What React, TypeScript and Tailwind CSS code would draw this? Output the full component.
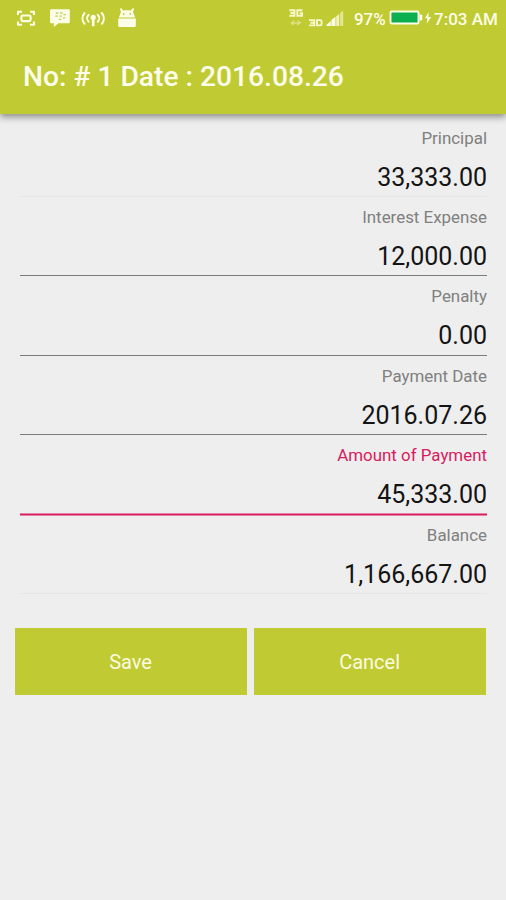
type Line = 'faint' | 'normal' | 'active';

interface Field {
  label: string;
  value: string;
  line: Line;
}

const fields: Field[] = [
  { label: 'Principal', value: '33,333.00', line: 'faint' },
  { label: 'Interest Expense', value: '12,000.00', line: 'normal' },
  { label: 'Penalty', value: '0.00', line: 'normal' },
  { label: 'Payment Date', value: '2016.07.26', line: 'normal' },
  { label: 'Amount of Payment', value: '45,333.00', line: 'active' },
  { label: 'Balance', value: '1,166,667.00', line: 'faint' },
];

const lineStyles: Record<Line, string> = {
  faint: 'h-px bg-[#e6e6e6]',
  normal: 'h-px bg-[#7b7b7b]',
  active: 'h-[2px] translate-y-[0.5px] bg-[#d81b60]',
};

function NotificationIcons() {
  return (
    <svg width="140" height="36" viewBox="0 0 140 36" fill="#fcfde8" className="shrink-0">
      {/* screen capture */}
      <g fill="none" stroke="#fcfde8" strokeWidth="2.1" strokeLinejoin="round">
        <path d="M18 15v-3.2h4M30 11.8h4V15M34 21.6v3.2h-4M22 24.8h-4v-3.2" />
        <rect x="21.4" y="15.5" width="9.2" height="5.6" rx="1.4" />
      </g>
      {/* messenger bubble */}
      <path d="M51.2 9.3h17.4a1.2 1.2 0 0 1 1.2 1.2v11.6a1.2 1.2 0 0 1-1.2 1.2H58.5L53.8 27v-3.7h-2.6a1.2 1.2 0 0 1-1.2-1.2V10.5a1.2 1.2 0 0 1 1.2-1.2z" />
      <g fill="none" stroke="#c8d05a" strokeWidth="1.3">
        <path d="M55.8 13h2.6M55.2 16.2h2.6M60 13h2.6M59.4 16.2h2.6M58.8 19.4h2.6M63.4 14.6h2.4M62.8 17.8h2.4" />
      </g>
      {/* antenna */}
      <g fill="none" stroke="#fcfde8" strokeWidth="2" strokeLinecap="round">
        <path d="M84.6 13c-2.8 3.2-2.8 7.6 0 10.8M88.6 14.8c-1.9 2-1.9 5 0 7M101.8 13c2.8 3.2 2.8 7.6 0 10.8M97.8 14.8c1.9 2 1.9 5 0 7" />
      </g>
      <circle cx="93.2" cy="17.4" r="2.6" />
      <path d="M91.9 18h2.6v8.2h-2.6z" />
      {/* robot */}
      <path fillRule="evenodd" d="M118.8 17.4l2.2-5.4-1.1-3.2 1.3-.7 2 2.4c2.3-.5 5.3-.5 7.6 0l2-2.4 1.3.7L133 12l2.2 5.4zM123.7 13.1a.9.9 0 1 0 0 1.8.9.9 0 0 0 0-1.8zM130.3 13.1a.9.9 0 1 0 0 1.8.9.9 0 0 0 0-1.8z" />
      <path d="M118.2 18.5h17.6v7.2a1.2 1.2 0 0 1-1.2 1.2h-15.2a1.2 1.2 0 0 1-1.2-1.2z" />
    </svg>
  );
}

function SignalIcons() {
  return (
    <svg width="58" height="36" viewBox="288 0 58 36" className="shrink-0">
      <g fill="none" stroke="#f7f8c9" strokeWidth="1.9">
        <path d="M289.3 10.2h5.2v5.6h-5.2M290.5 13h4M302.3 10.2h-5v5.6h4.8v-2.5h-2.4" />
        <path d="M309 20.1h5.3v5.3H309M310.3 22.8h4M317 20.1h3.2q1.4 0 1.4 1.4v2.5q0 1.4-1.4 1.4H317z" />
      </g>
      <path d="M294.4 20.6l-3.2 2.4 2.4 2M297.5 20.5l3 2-3.3 2.4M291.5 23h8" fill="none" stroke="#dce27e" strokeWidth="1.3" />
      <path d="M326.5 26v-1.3l4.3-3.8V26zM331.4 26v-5.9l4.1-3.4V26z" fill="#fcfde8" />
      <path d="M336.2 26v-9.4l3-2.7V26z" fill="#f1f3bd" />
      <path d="M340.1 26V13.1l3.1-2.7V26z" fill="#e2e78f" />
    </svg>
  );
}

function BatteryIcon() {
  return (
    <svg width="44" height="36" viewBox="388 0 44 36" className="shrink-0">
      <rect x="390.5" y="11.5" width="28" height="12" rx="1.2" fill="#0caf50" stroke="#fcfde8" strokeWidth="1.9" />
      <path d="M419.5 14.5h1.5q1.3 0 1.3 1.3v3.4q0 1.3-1.3 1.3h-1.5z" fill="#fcfde8" />
      <path d="M428.7 12l-3.7 6.3h2.4l-.7 5.5 4.5-6.9h-2.9z" fill="#fcfde8" />
    </svg>
  );
}

function StatusBar() {
  return (
    <div className="flex h-9 items-center leading-9 font-medium text-[#fcfde8]">
      <NotificationIcons />
      <div className="ml-auto flex items-center pr-2">
        <SignalIcons />
        <span className="ml-2 w-[34px] pt-px text-[16.9px] whitespace-nowrap">97%</span>
        <BatteryIcon />
        <span className="ml-[2px] w-[64px] pt-px text-[17px] whitespace-nowrap">7:03 AM</span>
      </div>
    </div>
  );
}

function FieldRow({ label, value, line }: Field) {
  const active = line === 'active';
  return (
    <div className="flex h-[79.4px] flex-col text-right">
      <div className={`pt-[9px] text-[16.9px] leading-[22px] ${active ? 'text-[#d81b60]' : 'text-[#808080]'}`}>
        {label}
      </div>
      <div className="pt-[14px] text-[25px] leading-[30px] text-[#141414]">{value}</div>
      <div className={`mt-auto shrink-0 ${lineStyles[line]}`} />
    </div>
  );
}

export default function App() {
  return (
    <div className="flex h-[900px] w-[506px] flex-col overflow-hidden bg-[#eeeeee] font-['Roboto',sans-serif]">
      <header className="h-[114px] shrink-0 bg-[#c0ca33] shadow-[0_3px_7px_rgba(0,0,0,0.42)]">
        <StatusBar />
        <h1 className="pt-[23px] pl-[23px] text-[28.2px] leading-[36px] font-medium whitespace-nowrap text-[#fdfdeb]">
          No: # 1 Date : 2016.08.26
        </h1>
      </header>
      <main className="flex flex-col pt-[3.7px]">
        <div className="pr-[19px] pl-5">
          {fields.map((field) => (
            <FieldRow key={field.label} {...field} />
          ))}
        </div>
        <div className="mt-[33.9px] flex gap-[7px] pr-[20.4px] pl-[14.6px] text-[20px] text-[#fafbe0]">
          <button className="h-[67px] flex-1 bg-[#c0ca33] pt-[2px]">Save</button>
          <button className="h-[67px] flex-1 bg-[#c0ca33] pt-[2px]">Cancel</button>
        </div>
      </main>
    </div>
  );
}
